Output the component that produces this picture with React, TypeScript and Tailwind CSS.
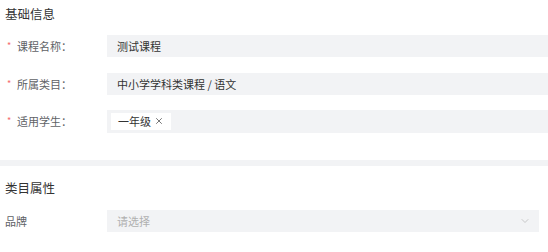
import React from 'react';
import { ChevronDown, X } from 'lucide-react';

const font = { fontFamily: '"Noto Sans CJK SC", "Noto Sans", sans-serif' };

const Row = ({ label, required, children, className = '' }: { label: string; required?: boolean; children: React.ReactNode; className?: string }) => (
  <div className={`flex items-center h-[22px] ${className}`}>
    <div className="w-[107px] flex items-center text-[11px] text-[#606266]">
      {required ? (
        <span className="w-[12px] pl-[7px] text-[#f56c6c] text-[9px]">*</span>
      ) : (
        <span className="w-[5px]" />
      )}
      <span className={required ? 'pl-[5px]' : ''}>{label}</span>
    </div>
    {children}
  </div>
);

export default function App() {
  return (
    <div className="w-[548px] h-[252px] bg-white overflow-hidden" style={font}>
      <div className="pt-[5px]">
        <div className="pl-[5px] text-[12.5px] leading-[18px] text-[#333]">基础信息</div>

        <Row label="课程名称：" required className="mt-[12px]">
          <div className="flex-1 h-[22px] bg-[#f2f3f5] flex items-center pl-[10px] text-[11px] text-[#333] mr-[-10px]">
            测试课程
          </div>
        </Row>

        <Row label="所属类目：" required className="mt-[16px]">
          <div className="flex-1 h-[22px] bg-[#f2f3f5] flex items-center pl-[10px] text-[11px] text-[#333] mr-[-10px]">
            中小学学科类课程 / 语文
          </div>
        </Row>

        <Row label="适用学生：" required className="mt-[15px]">
          <div className="flex-1 h-[23px] bg-[#f2f3f5] flex items-center pl-[4px] mr-[-10px]">
            <span className="h-[17px] bg-white flex items-center gap-[3px] pl-[7px] pr-[7px] text-[11px] text-[#333]">
              一年级
              <X className="w-[10px] h-[10px] text-[#444]" strokeWidth={1.75} />
            </span>
          </div>
        </Row>
      </div>

      <div className="mt-[28px] h-[6px] bg-[#f2f3f5]" />

      <div className="mt-[13px] pl-[5px] text-[12.5px] leading-[18px] text-[#333]">类目属性</div>

      <Row label="品牌" className="mt-[13px] pr-[9px]">
        <div className="flex-1 h-[22px] bg-[#f2f3f5] flex items-center justify-between pl-[10px] pr-[8px] text-[11px] text-[#b0b0b0]">
          请选择
          <ChevronDown className="w-[12px] h-[12px] text-[#b8b8b8]" strokeWidth={1.5} />
        </div>
      </Row>
    </div>
  );
}
